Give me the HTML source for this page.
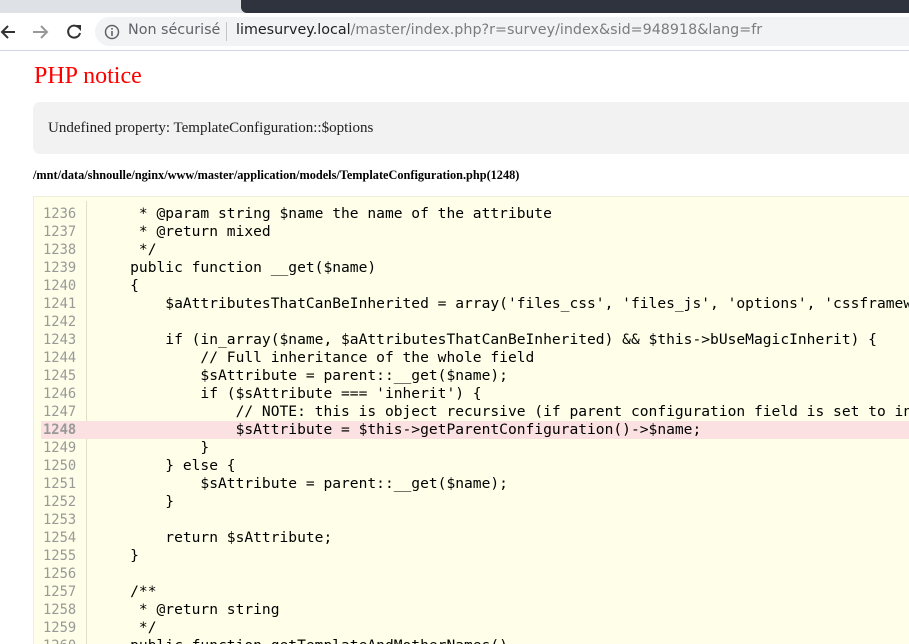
<!DOCTYPE html>
<html><head><meta charset="utf-8"><style>
html,body{margin:0;width:909px;height:644px;overflow:hidden}
body{background:#fff;position:relative;font-family:"Liberation Sans",sans-serif}
.tabs{position:absolute;left:0;top:0;width:909px;height:13px;background:#dee1e6}
.tab{position:absolute;left:241px;top:0;width:668px;height:13px;background:#2f333d;border-bottom-left-radius:6px}
.tb{position:absolute;left:0;top:13px;width:909px;height:37px;background:#fff;border-bottom:1px solid #d0d4e4}
.omni{position:absolute;left:95px;top:4px;width:814px;height:29px;background:#f1f3f4;border-radius:15px 0 0 15px}
.url{position:absolute;left:236px;top:22px;font-family:"DejaVu Sans",sans-serif;font-size:14.3px;color:#7a7d80;white-space:pre}
.url b{font-weight:normal;color:#202124}
.ns{position:absolute;left:128px;top:22px;font-family:"DejaVu Sans",sans-serif;font-size:14.3px;color:#5f6368}
.sep{position:absolute;left:226px;top:22px;width:1px;height:19px;background:#c4c7c9}
h1{position:absolute;left:34px;top:63px;margin:0;font:24px "Liberation Serif",serif;color:#f00}
.msg{position:absolute;left:33px;top:102px;width:876px;height:52px;background:#f2f2f2;border-radius:7px 0 0 7px}
.msg span{position:absolute;left:15px;top:18px;font:15px "Liberation Serif",serif;color:#222}
.path{position:absolute;left:33px;top:168px;font:bold 12.3px "Liberation Serif",serif;color:#000;white-space:nowrap}
.code{position:absolute;left:33px;top:196px;width:876px;height:460px;background:#ffffe9;border:1px solid #eeeede;border-right:none;overflow:hidden}
.ln{position:absolute;left:0;width:876px;height:18px;margin-top:1px;font:14.6px/18px "DejaVu Sans Mono",monospace;white-space:pre;color:#000;overflow:hidden}
.ln i{font-style:normal;position:absolute;left:9px;color:#999;font-size:13.8px}
.ln s{text-decoration:none;position:absolute;left:61px}
.hl{background:#fbe1e2}
.hl i{font-weight:bold}
.vl{position:absolute;left:52px;top:4px;width:1px;height:460px;background:#e0e0c8}
</style></head><body>
<div class="tabs"><div class="tab"></div></div>
<div class="tb">
<svg style="position:absolute;left:0;top:9px" width="90" height="20" viewBox="0 0 90 20"><path d="M15 10H3M8 4L2 10l6 6" stroke="#333" stroke-width="2" fill="none"/><path d="M33 10h13M41 4l6 6-6 6" stroke="#999" stroke-width="2" fill="none"/><path d="M78 5a6 6 0 1 0 2 6" stroke="#333" stroke-width="2" fill="none"/><path d="M75 3h6v6z" fill="#333"/></svg>
<div class="omni"></div>
<svg style="position:absolute;left:104px;top:11px" width="16" height="16"><circle cx="8" cy="8" r="6.5" stroke="#5f6368" stroke-width="1.5" fill="none"/><rect x="7.2" y="7" width="1.6" height="5" fill="#5f6368"/><rect x="7.2" y="4" width="1.6" height="1.6" fill="#5f6368"/></svg>
</div>
<div class="ns">Non sécurisé</div><div class="sep"></div>
<div class="url"><b>limesurvey.local</b>/master/index.php?r=survey/index&amp;sid=948918&amp;lang=fr</div>
<h1>PHP notice</h1>
<div class="msg"><span>Undefined property: TemplateConfiguration::$options</span></div>
<div class="path">/mnt/data/shnoulle/nginx/www/master/application/models/TemplateConfiguration.php(1248)</div>
<div class="code">
<div class="vl"></div>
<div class="ln" style="top:7px"><i>1236</i><s>     * @param string $name the name of the attribute</s></div>
<div class="ln" style="top:25px"><i>1237</i><s>     * @return mixed</s></div>
<div class="ln" style="top:43px"><i>1238</i><s>     */</s></div>
<div class="ln" style="top:61px"><i>1239</i><s>    public function __get($name)</s></div>
<div class="ln" style="top:79px"><i>1240</i><s>    {</s></div>
<div class="ln" style="top:97px"><i>1241</i><s>        $aAttributesThatCanBeInherited = array('files_css', 'files_js', 'options', 'cssframework_name');</s></div>
<div class="ln" style="top:115px"><i>1242</i><s></s></div>
<div class="ln" style="top:133px"><i>1243</i><s>        if (in_array($name, $aAttributesThatCanBeInherited) &amp;&amp; $this-&gt;bUseMagicInherit) {</s></div>
<div class="ln" style="top:151px"><i>1244</i><s>            // Full inheritance of the whole field</s></div>
<div class="ln" style="top:169px"><i>1245</i><s>            $sAttribute = parent::__get($name);</s></div>
<div class="ln" style="top:187px"><i>1246</i><s>            if ($sAttribute === 'inherit') {</s></div>
<div class="ln" style="top:205px"><i>1247</i><s>                // NOTE: this is object recursive (if parent configuration field is set to inherit)</s></div>
<div class="ln hl" style="top:223px;left:7px"><i style="left:2px">1248</i><s style="left:54px">                $sAttribute = $this-&gt;getParentConfiguration()-&gt;$name;</s></div>
<div class="ln" style="top:241px"><i>1249</i><s>            }</s></div>
<div class="ln" style="top:259px"><i>1250</i><s>        } else {</s></div>
<div class="ln" style="top:277px"><i>1251</i><s>            $sAttribute = parent::__get($name);</s></div>
<div class="ln" style="top:295px"><i>1252</i><s>        }</s></div>
<div class="ln" style="top:313px"><i>1253</i><s></s></div>
<div class="ln" style="top:331px"><i>1254</i><s>        return $sAttribute;</s></div>
<div class="ln" style="top:349px"><i>1255</i><s>    }</s></div>
<div class="ln" style="top:367px"><i>1256</i><s></s></div>
<div class="ln" style="top:385px"><i>1257</i><s>    /**</s></div>
<div class="ln" style="top:403px"><i>1258</i><s>     * @return string</s></div>
<div class="ln" style="top:421px"><i>1259</i><s>     */</s></div>
<div class="ln" style="top:439px"><i>1260</i><s>    public function getTemplateAndMotherNames()</s></div>
</div>
</body></html>
